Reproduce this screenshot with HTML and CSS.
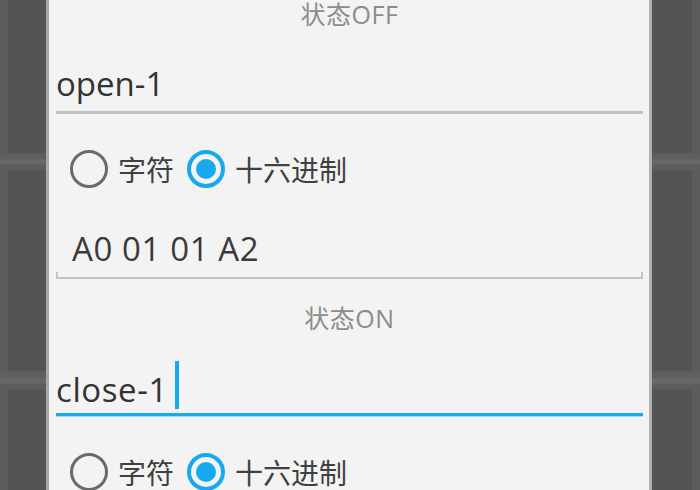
FILE: index.html
```html
<!DOCTYPE html>
<html lang="zh">
<head>
<meta charset="utf-8">
<title>状态设置</title>
<link rel="stylesheet" href="styles.css">
</head>
<body>
<div class="screen">
  <div class="side side-left">
    <div class="cell cell-a"></div>
    <div class="sep sep-a"></div>
    <div class="cell cell-b"></div>
    <div class="sep sep-b"></div>
    <div class="cell cell-c"></div>
  </div>
  <div class="dialog">
    <div class="label">状态OFF</div>
    <div class="field field-name">open-1</div>
    <div class="radios radios-1">
      <span class="radio"></span><span class="radio-text">字符</span>
      <span class="radio checked"></span><span class="radio-text">十六进制</span>
    </div>
    <div class="field field-hex">A0 01 01 A2</div>
    <div class="hex-line"></div>
    <div class="label label-on">状态ON</div>
    <div class="field field-name focused">close-1<span class="cursor"></span></div>
    <div class="radios radios-2">
      <span class="radio"></span><span class="radio-text">字符</span>
      <span class="radio checked"></span><span class="radio-text">十六进制</span>
    </div>
  </div>
  <div class="side side-right">
    <div class="cell cell-a"></div>
    <div class="sep sep-a"></div>
    <div class="cell cell-b"></div>
    <div class="sep sep-b"></div>
    <div class="cell cell-c"></div>
  </div>
</div>
</body>
</html>
```
FILE: styles.css
```css
html, body {
  margin: 0;
  padding: 0;
}
body {
  background: #5b5b5b;
  font-family: "Open Sans", "Noto Sans CJK SC", sans-serif;
}
.screen {
  display: flex;
  width: 700px;
  height: 490px;
  overflow: hidden;
}
.side {
  flex: none;
  display: flex;
  flex-direction: column;
  background: #5c5c5c;
}
.side-left {
  width: 46px;
}
.side-right {
  width: 48px;
}
.cell {
  background: #545454;
}
.side-left .cell {
  margin-left: 8px;
}
.side-right .cell {
  margin-right: 8px;
}
.cell-a { height: 153px; flex: none; }
.cell-b { height: 201px; flex: none; }
.cell-c { flex: 1; }
.sep {
  flex: none;
  background: linear-gradient(#5e5e5e 0, #606060 35%, #686868 45%, #686868 60%, #5e5e5e 70%, #5c5c5c 100%);
}
.sep-a { height: 17px; }
.sep-b { height: 19px; }

.dialog {
  width: 587px;
  flex: none;
  background: #f3f3f3;
  border-left: 3px solid #a9a9a9;
  border-right: 3px solid #b2b2b2;
  padding: 0 6px 0 7px;
  display: flex;
  flex-direction: column;
  overflow: hidden;
}
.label {
  height: 28px;
  line-height: 28px;
  text-align: center;
  font-size: 25px;
  letter-spacing: 0.5px;
  color: #8c8c8c;
  flex: none;
}
.label-on {
  margin-top: 25px;
}
.field {
  flex: none;
  font-size: 33px;
  line-height: 40px;
  color: #333333;
  white-space: nowrap;
}
.field-name {
  margin-top: 36px;
  padding-bottom: 7px;
  border-bottom: 3px solid #c2c2c2;
}
.field-name.focused {
  margin-top: 38px;
  padding-bottom: 3px;
  border-bottom: 3px solid #16a9ee;
  box-shadow: 0 1px 0 #a8dcf6;
  letter-spacing: 0.6px;
}
.cursor {
  display: inline-block;
  width: 4px;
  height: 48px;
  margin-top: -10px;
  margin-left: 7px;
  vertical-align: -7px;
  background: #16a9ee;
}
.field-hex {
  margin-top: 41px;
  padding-left: 16px;
  padding-bottom: 3px;
  color: #3a3a3a;
  letter-spacing: 0.6px;
}
.hex-line {
  flex: none;
  height: 5px;
  border-left: 2px solid #c3c3c3;
  border-right: 2px solid #c3c3c3;
  border-bottom: 2px solid #c3c3c3;
}
.radios {
  flex: none;
  display: flex;
  align-items: center;
  height: 38px;
  padding-left: 14px;
  font-family: "Noto Sans CJK SC", sans-serif;
  font-size: 28px;
  color: #404040;
}
.radios-1 { margin-top: 36px; }
.radios-2 { margin-top: 37px; }
.radio {
  flex: none;
  width: 38px;
  height: 38px;
  box-sizing: border-box;
  border-radius: 50%;
  border: 3px solid #6a6a6a;
  display: flex;
  align-items: center;
  justify-content: center;
}
.radio.checked {
  border: 4px solid #16a9ee;
  margin-left: 13px;
}
.radio.checked::before {
  content: "";
  width: 20px;
  height: 20px;
  border-radius: 50%;
  background: #16a9ee;
}
.radio-text {
  margin-left: 10px;
  line-height: 38px;
}
```
